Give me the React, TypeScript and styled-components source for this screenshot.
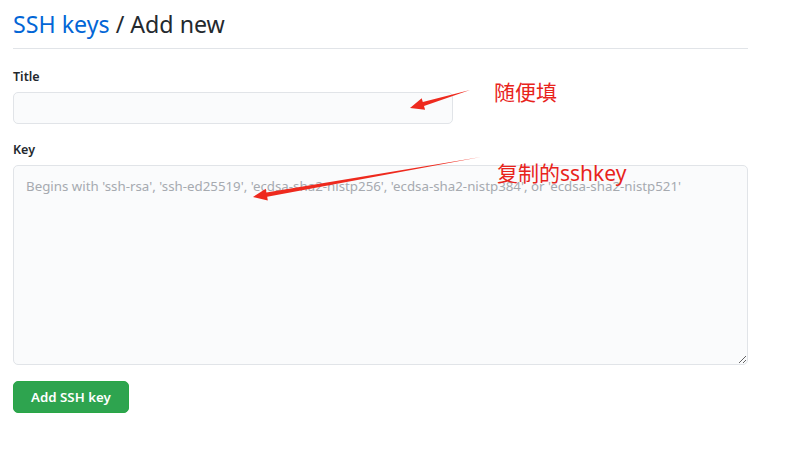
import React from 'react'
import styled, { createGlobalStyle } from 'styled-components'

const GlobalStyle = createGlobalStyle`
  html, body {
    margin: 0;
    padding: 0;
    background: #fff;
  }
  body {
    font-family: 'Noto Sans', 'Open Sans', 'Liberation Sans', sans-serif;
    color: #24292e;
  }
`

const Page = styled.div`
  position: relative;
  width: 801px;
  height: 474px;
  overflow: hidden;
`

const Content = styled.div`
  width: 735px;
  padding: 8px 0 0 13px;
`

const Heading = styled.div`
  font-size: 23.2px;
  font-weight: 400;
  line-height: 32px;
  padding-bottom: 8px;
  border-bottom: 1px solid #e1e4e8;
  color: #24292e;
`

const Crumb = styled.span`
  color: #0366d6;
`

const Form = styled.form`
  display: flex;
  flex-direction: column;
  padding-top: 19px;
`

const Group = styled.div<{ $gap?: number }>`
  display: flex;
  flex-direction: column;
  margin-bottom: ${({ $gap }) => $gap ?? 17}px;
`

const Label = styled.label`
  font-size: 12.5px;
  font-weight: 600;
  line-height: 18px;
  margin-bottom: 6px;
`

const Input = styled.input`
  width: 440px;
  height: 32px;
  box-sizing: border-box;
  border: 1px solid #e1e4e8;
  border-radius: 5px;
  background: #fafbfc;
  padding: 5px 12px;
  font: inherit;
  outline: none;
`

const TextArea = styled.textarea`
  width: 735px;
  height: 200px;
  box-sizing: border-box;
  border: 1px solid #e1e4e8;
  border-radius: 5px;
  background: #fafbfc;
  padding: 10px 12px;
  font-family: inherit;
  font-size: 13.3px;
  line-height: 20px;
  outline: none;
  resize: vertical;
  &::placeholder {
    color: #a6aab0;
  }
`

const Button = styled.button`
  align-self: flex-start;
  height: 32px;
  padding: 0 17px;
  border: 1px solid #28a745;
  border-radius: 5px;
  background: #2ea44f;
  color: #fff;
  font-family: inherit;
  font-size: 13.3px;
  font-weight: 600;
  cursor: pointer;
`

const Note = styled.div<{ $x: number; $y: number }>`
  position: absolute;
  left: ${({ $x }) => $x}px;
  top: ${({ $y }) => $y}px;
  color: #e8231b;
  font-family: 'Noto Sans', 'Noto Sans CJK SC', sans-serif;
  font-size: 21px;
  line-height: 24px;
  white-space: nowrap;
`

const Overlay = styled.svg`
  position: absolute;
  left: 0;
  top: 0;
  pointer-events: none;
`

// tapered arrow from tail to tip
const arrowPath = (x1: number, y1: number, x2: number, y2: number) => {
  const dx = x2 - x1
  const dy = y2 - y1
  const len = Math.hypot(dx, dy)
  const ux = dx / len
  const uy = dy / len
  const nx = -uy
  const ny = ux
  const headLen = 14
  const headW = 6
  const shaftW = 2.2
  const bx = x2 - ux * headLen
  const by = y2 - uy * headLen
  const p = (x: number, y: number) => `${x.toFixed(1)},${y.toFixed(1)}`
  return [
    'M', p(x1, y1),
    'L', p(bx + nx * shaftW, by + ny * shaftW),
    'L', p(bx + nx * headW, by + ny * headW),
    'L', p(x2, y2),
    'L', p(bx - nx * headW, by - ny * headW),
    'L', p(bx - nx * shaftW, by - ny * shaftW),
    'Z',
  ].join(' ')
}

export default function App() {
  return (
    <Page>
      <GlobalStyle />
      <Content>
        <Heading>
          <Crumb>SSH keys</Crumb> / Add new
        </Heading>
        <Form onSubmit={(e) => e.preventDefault()}>
          <Group>
            <Label>Title</Label>
            <Input type="text" />
          </Group>
          <Group $gap={16}>
            <Label>Key</Label>
            <TextArea placeholder="Begins with 'ssh-rsa', 'ssh-ed25519', 'ecdsa-sha2-nistp256', 'ecdsa-sha2-nistp384', or 'ecdsa-sha2-nistp521'" />
          </Group>
          <Button type="submit">Add SSH key</Button>
        </Form>
      </Content>

      <Overlay width="801" height="474" viewBox="0 0 801 474">
        <path d={arrowPath(470, 90, 410, 108)} fill="#ee2a1e" />
        <path d={arrowPath(481, 157, 253, 197)} fill="#ee2a1e" />
      </Overlay>
      <Note $x={494} $y={80}>随便填</Note>
      <Note $x={497} $y={161}>复制的sshkey</Note>
    </Page>
  )
}
